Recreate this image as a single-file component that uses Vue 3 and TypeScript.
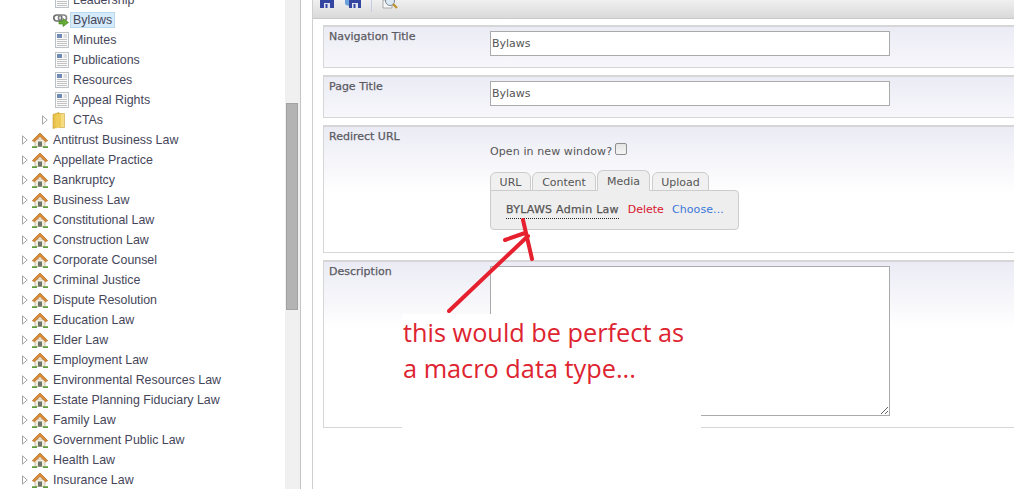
<script setup lang="ts">
interface Node { label: string; icon: 'doc' | 'link' | 'folder' | 'house'; depth: number; arrow?: boolean; selected?: boolean }
const sub: Node[] = [
  { label: 'Leadership', icon: 'doc', depth: 2 },
  { label: 'Bylaws', icon: 'link', depth: 2, selected: true },
  { label: 'Minutes', icon: 'doc', depth: 2 },
  { label: 'Publications', icon: 'doc', depth: 2 },
  { label: 'Resources', icon: 'doc', depth: 2 },
  { label: 'Appeal Rights', icon: 'doc', depth: 2 },
  { label: 'CTAs', icon: 'folder', depth: 1, arrow: true },
]
const top = ['Antitrust Business Law', 'Appellate Practice', 'Bankruptcy', 'Business Law', 'Constitutional Law', 'Construction Law', 'Corporate Counsel', 'Criminal Justice', 'Dispute Resolution', 'Education Law', 'Elder Law', 'Employment Law', 'Environmental Resources Law', 'Estate Planning Fiduciary Law', 'Family Law', 'Government Public Law', 'Health Law', 'Insurance Law']
const nodes: Node[] = [...sub, ...top.map((label): Node => ({ label, icon: 'house', depth: 0, arrow: true }))]
const tabs = ['URL', 'Content', 'Media', 'Upload']
</script>

<template>
  <div class="page">
    <svg class="defs" width="0" height="0" aria-hidden="true">
      <defs>
        <symbol id="i-doc" viewBox="0 0 14 16">
          <rect x="0.5" y="0.5" width="13" height="15" fill="#fafafa" stroke="#bcc2c8" />
          <rect x="2" y="2" width="5" height="4" fill="#6f8bb5" />
          <path d="M8.5 3h3.5M8.5 5h3.5M2 7.5h10M2 9.5h10M2 11.5h10M2 13.5h10" stroke="#c2c2c2" fill="none" />
        </symbol>
        <symbol id="i-link" viewBox="0 0 16 13">
          <rect x="0.8" y="1" width="8" height="6" rx="2.9" fill="none" stroke="#6f6f6f" stroke-width="1.7" />
          <rect x="5.5" y="1" width="8" height="6" rx="2.9" fill="none" stroke="#858585" stroke-width="1.7" />
          <path d="M6 7h4V4.5l5.5 4-5.5 4V10H6z" fill="#66ad35" stroke="#3c7a1c" stroke-width="0.6" />
        </symbol>
        <symbol id="i-folder" viewBox="0 0 14 17">
          <path d="M1 2.5 7 .5v14l-6 2z" fill="#e8c24a" stroke="#c39a2a" stroke-width="0.6" />
          <path d="M7 1.5h5.5v14H7z" fill="#f5dc82" stroke="#c9a53a" stroke-width="0.6" />
          <path d="M3.5 3 9 1.5v13.5l-5.5 1.5z" fill="#eecb57" />
        </symbol>
        <symbol id="i-house" viewBox="0 0 16 15">
          <path d="M3 6h10v7.5H3z" fill="#f1ecdd" stroke="#b0a488" stroke-width="0.6" />
          <path d="M6 8.5h4v5H6z" fill="#6f7468" />
          <path d="M0.3 7.6 8 0l7.7 7.6-2 1.2L8 3.6 2.3 8.8z" fill="#d98a33" stroke="#a8611c" stroke-width="0.6" />
          <path d="M0 13.2h5v1.8H0zM11 13.2h5v1.8h-5z" fill="#5f9a3f" />
        </symbol>
      </defs>
    </svg>

    <aside class="tree">
      <ul class="tree-list">
        <li v-for="n in nodes" :key="n.label" class="row" :class="'depth-' + n.depth">
          <span class="arrow-slot">
            <svg v-if="n.arrow" width="6" height="10" viewBox="0 0 6 10"><path d="M.5.8 5.2 5 .5 9.2z" fill="#fff" stroke="#a6a6a6" /></svg>
          </span>
          <svg class="icon" :class="'icon-' + n.icon"><use :href="'#i-' + n.icon" /></svg>
          <span class="label" :class="{ selected: n.selected }">{{ n.label }}</span>
        </li>
      </ul>
    </aside>

    <div class="scrollbar"><div class="thumb"></div></div>

    <main class="main">
      <div class="toolbar">
        <svg class="tool" width="14" height="8" viewBox="0 0 14 8"><path d="M0 0h14v8H0z" fill="#3446a0" /><path d="M4 3h6v5H4z" fill="#dfe3f2" /><path d="M5.5 4h2v4h-2z" fill="#3446a0" /></svg>
        <svg class="tool tool-b" width="16" height="8" viewBox="0 0 16 8"><circle cx="4" cy="1" r="5" fill="#6aa3dc" /><path d="M4 0h12v8H4z" fill="#3446a0" /><path d="M7 3h6v5H7z" fill="#dfe3f2" /><path d="M8.5 4h2v4h-2z" fill="#3446a0" /></svg>
        <span class="sep"></span>
        <svg class="tool" width="16" height="9" viewBox="0 0 16 9"><path d="M1 0h9v8H1z" fill="#f7f7f7" stroke="#999" stroke-width="0.8" /><circle cx="8" cy="1" r="4.5" fill="#dbe9f5" stroke="#7a8894" /><path d="m11 4 4 4" stroke="#c09433" stroke-width="2.4" /></svg>
      </div>

      <form class="form" @submit.prevent>
        <section class="panel p-short">
          <div class="field-label">Navigation Title</div>
          <input class="text" value="Bylaws" />
        </section>
        <section class="panel p-short">
          <div class="field-label">Page Title</div>
          <input class="text" value="Bylaws" />
        </section>
        <section class="panel p-redirect">
          <div class="field-label">Redirect URL</div>
          <div class="field">
            <div class="newwin"><span>Open in new window?</span><span class="check"></span></div>
            <div class="tabs">
              <span v-for="t in tabs" :key="t" class="tab" :class="['tab-' + t.toLowerCase(), { active: t === 'Media' }]">{{ t }}</span>
            </div>
            <div class="tab-panel">
              <span class="media-name">BYLAWS Admin Law</span>
              <span class="del">Delete</span>
              <span class="choose">Choose...</span>
            </div>
          </div>
        </section>
        <section class="panel p-desc">
          <div class="field-label">Description</div>
          <textarea class="area"></textarea>
        </section>
      </form>
    </main>

    <svg class="note-arrow" width="100" height="100" viewBox="0 0 100 100" aria-hidden="true">
      <path d="M2 94 81 19M58 23 78 16M76 3 85 42" fill="none" stroke="#e6202e" stroke-width="4" stroke-linecap="round" />
    </svg>
    <div class="note">this would be perfect as<br />a macro data type...</div>
  </div>
</template>

<style>
html, body { margin: 0; background: #fff; overflow: hidden; }
</style>

<style scoped>
.page {
  position: relative;
  display: flex;
  width: 1014px;
  height: 489px;
  overflow: hidden;
  background: #fff;
  font-family: "Liberation Sans", Arial, sans-serif;
}
.defs { position: absolute; }
.tree { width: 285px; flex: none; overflow: hidden; }
.tree-list { list-style: none; margin: -10px 0 0; padding: 0; }
.row {
  display: flex;
  align-items: center;
  height: 20px;
  font-size: 12.4px;
  color: #46465a;
}
.depth-0 { padding-left: 22px; }
.depth-1 { padding-left: 42px; }
.depth-2 { padding-left: 42px; }
.arrow-slot { width: 10px; flex: none; display: flex; align-items: center; }
.icon { flex: none; }
.icon-house { width: 16px; height: 15px; margin-right: 2px; }
.icon-folder { width: 14px; height: 17px; margin-right: 4px; }
.icon-doc { width: 14px; height: 16px; margin: 0 1px 0 3px; }
.icon-link { width: 16px; height: 13px; margin: 0 1px 0 1px; }
.label { padding: 0 2px; border: 1px solid transparent; line-height: 14px; }
.label.selected { background: #d6ebfa; border-color: #b9d9f0; }

.scrollbar {
  width: 16px;
  flex: none;
  box-sizing: border-box;
  padding: 103px 2px 0 1px;
  background: #f0f0f0;
  border-right: 1px solid #c4c4c4;
}
.thumb { height: 207px; background: #b3b3b3; border: 1px solid #a2a2a2; box-sizing: border-box; }

.main {
  flex: 1;
  margin-left: 11px;
  border-left: 1px solid #cfcfcf;
  min-width: 0;
}
.toolbar {
  display: flex;
  align-items: flex-start;
  height: 18px;
  padding-left: 7px;
  background: linear-gradient(#f0f0f0, #d9d9d9);
  border-bottom: 1px solid #c8c8c8;
}
.tool { display: block; }
.tool-b { margin-left: 11px; }
.sep { width: 1px; height: 12px; background: #c9cbe0; margin: 0 10px; }
.form { padding: 6px 0 0 10px; display: flex; flex-direction: column; gap: 7px; }
.panel {
  display: flex;
  align-items: flex-start;
  box-sizing: border-box;
  padding: 5px 0 0 5px;
  border: 1px solid #d6d6d6;
  border-top-width: 2px;
  border-right: 0;
  background: linear-gradient(#ebebf5, #fff 66px);
  font-family: "DejaVu Sans", Verdana, sans-serif;
  font-size: 11px;
  color: #555;
}
.p-short { height: 43px; }
.p-redirect { height: 128px; }
.p-desc { height: 168px; }
.field-label { width: 161px; flex: none; margin-top: -2px; color: #5a5a62; line-height: 13px; -webkit-text-stroke: 0.25px #5a5a62; }
.text {
  box-sizing: border-box;
  width: 400px;
  height: 25px;
  margin: -1px 0 0;
  padding: 0 1px;
  border: 1px solid #aaa;
  background: #fff;
  font: 11px "DejaVu Sans", Verdana, sans-serif;
  color: #555;
  outline: none;
}
.field { display: flex; flex-direction: column; width: 400px; }
.newwin { display: flex; align-items: flex-start; gap: 3px; margin-top: 12px; height: 16px; line-height: 15px; letter-spacing: 0.1px; }
.check {
  width: 12px; height: 12px; box-sizing: border-box; margin-top: -1px;
  border: 1px solid #8f8f8f; border-radius: 2px; background: linear-gradient(#e4e4e4, #f4f4f4);
}
.tabs { display: flex; align-items: flex-end; height: 21px; margin-top: 10px; gap: 1px; margin-bottom: -1px; position: relative; z-index: 1; }
.tab {
  box-sizing: border-box;
  height: 19px;
  text-align: center;
  line-height: 19px;
  border: 1px solid #ccc;
  border-radius: 6px 6px 0 0;
  background: #f0f0f0;
  color: #555;
}
.tab-url { width: 41px; }
.tab-content { width: 64px; }
.tab-media { width: 53px; }
.tab-upload { width: 57px; margin-left: 1px; }
.tab.active { height: 21px; line-height: 22px; background: #eee; border-bottom-color: #eee; }
.tab-panel {
  box-sizing: border-box;
  width: 249px;
  height: 40px;
  padding: 11px 0 0 15px;
  background: #eee;
  border: 1px solid #ccc;
  border-radius: 0 4px 4px 4px;
  line-height: 16px;
  white-space: nowrap;
}
.media-name { display: inline-block; border-bottom: 1px dotted #222; height: 16px; margin-right: 8px; letter-spacing: 0.25px; color: #555; -webkit-text-stroke: 0.25px #555; }
.del { color: #d8142e; margin-right: 8px; margin-left: 1px; }
.choose { color: #3a78d8; letter-spacing: 0.1px; }
.area {
  box-sizing: border-box;
  width: 400px;
  height: 150px;
  margin: -1px 0 0;
  border: 1px solid #aaa;
  background: #fff;
  outline: none;
  resize: both;
}

.note-arrow { position: absolute; left: 447px; top: 217px; z-index: 2; }
.note {
  position: absolute;
  left: 402px;
  top: 314px;
  width: 299px;
  height: 115px;
  box-sizing: border-box;
  padding: 0 0 0 1px;
  background: #fff;
  font-family: "Open Sans", sans-serif;
  font-size: 25.3px;
  line-height: 36px;
  color: #dd2430;
  white-space: nowrap;
}
</style>
